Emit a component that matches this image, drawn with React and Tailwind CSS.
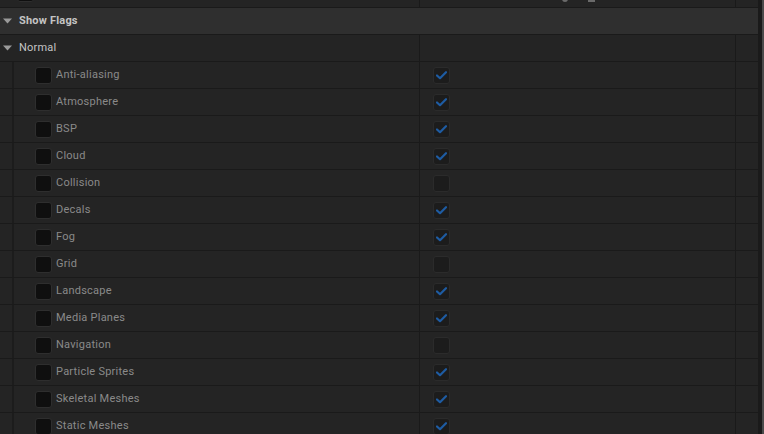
import React from "react";

const items = [
  ["Anti-aliasing", true],
  ["Atmosphere", true],
  ["BSP", true],
  ["Cloud", true],
  ["Collision", false],
  ["Decals", true],
  ["Fog", true],
  ["Grid", false],
  ["Landscape", true],
  ["Media Planes", true],
  ["Navigation", false],
  ["Particle Sprites", true],
  ["Skeletal Meshes", true],
  ["Static Meshes", true],
];

function Tri() {
  return (
    <svg width="9" height="6" viewBox="0 0 9 6" className="shrink-0">
      <path d="M0 0.5 L9 0.5 L4.5 5.5 Z" fill="#9a9a9a" />
    </svg>
  );
}

function ValueBox({ checked }) {
  return (
    <div className="w-[17px] h-[17px] rounded-[3px] bg-[#1c1c1c] border border-[#2b2b2b] flex items-center justify-center">
      {checked && (
        <svg width="11" height="9" viewBox="0 0 11 9">
          <path d="M1 4.5 L4 7.2 L10 1.2" stroke="#1e5ca3" strokeWidth="2.2" fill="none" strokeLinecap="round" strokeLinejoin="round" />
        </svg>
      )}
    </div>
  );
}

export default function App() {
  return (
    <div
      className="w-[764px] h-[434px] overflow-hidden flex bg-[#1a1a1a]"
      style={{ fontFamily: "Roboto, 'Noto Sans', sans-serif" }}
    >
      <div className="w-[758px] flex flex-col shrink-0">
        <div className="h-[8px] shrink-0 flex border-b border-[#1a1a1a] bg-[#242424]">
          <div className="w-[420px] border-r border-[#1a1a1a] relative">
            <div className="absolute left-[17px] top-[-15px] w-[17px] h-[17px] rounded-[3px] bg-[#0f0f0f] border border-[#2e2e2e]" />
          </div>
          <div className="w-[316px] border-r border-[#1a1a1a] relative">
            <div className="absolute left-[142px] top-[-4px] w-[6px] h-[6px] rounded-full bg-[#6a6a6a]" />
            <div className="absolute left-[168px] top-[-4px] w-[7px] h-[6px] bg-[#6a6a6a]" />
          </div>
          <div className="flex-1" />
        </div>
        <div className="h-[27px] shrink-0 flex items-center gap-[7px] pl-[3px] border-b border-[#1a1a1a] bg-[#2f2f2f]">
          <Tri />
          <span className="text-[11px] font-bold tracking-[0.2px] text-[#c4c4c4]">Show Flags</span>
        </div>
        <div className="h-[27px] shrink-0 flex border-b border-[#1a1a1a] bg-[#242424]">
          <div className="w-[420px] border-r border-[#1a1a1a] flex items-center gap-[7px] pl-[3px]">
            <Tri />
            <span className="text-[11px] tracking-[0.2px] text-[#c4c4c4]">Normal</span>
          </div>
          <div className="w-[316px] border-r border-[#1a1a1a]" />
          <div className="flex-1" />
        </div>
        {items.map(([name, checked]) => (
          <div key={name} className="h-[27px] shrink-0 flex border-b border-[#1a1a1a] bg-[#242424]">
            <div className="w-[420px] border-r border-[#1a1a1a] flex items-center">
              <div className="w-[12px] h-full" />
              <div className="w-[2px] h-full bg-[#1c1c1c]" />
              <div className="w-[21px]" />
              <div className="w-[17px] h-[17px] rounded-[3px] bg-[#0f0f0f] border border-[#2e2e2e]" />
              <span className="ml-[4px] text-[11px] tracking-[0.25px] text-[#8a8a8a]">{name}</span>
            </div>
            <div className="w-[316px] border-r border-[#1a1a1a] flex items-center pl-[13px]">
              <ValueBox checked={checked} />
            </div>
            <div className="flex-1" />
          </div>
        ))}
      </div>
      <div className="flex-1 flex">
        <div className="w-[4px] bg-[#1a1a1a]" />
        <div className="flex-1 bg-[#4a4a4a]" />
      </div>
    </div>
  );
}
